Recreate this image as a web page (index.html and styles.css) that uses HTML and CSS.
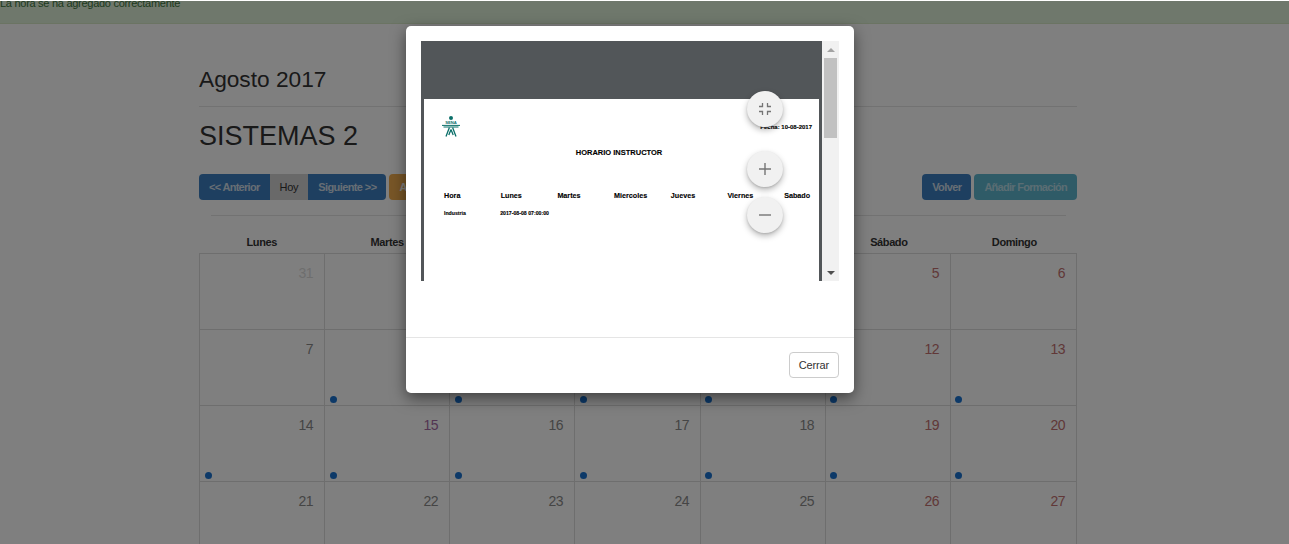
FILE: index.html
```html
<!DOCTYPE html>
<html lang="es">
<head>
<meta charset="utf-8">
<title>Horario</title>
<link rel="stylesheet" href="styles.css">
</head>
<body>
<div class="alert"><span class="alert-text">La hora se ha agregado correctamente</span></div>
<main class="container">
  <h3 class="month">Agosto 2017</h3>
  <h2 class="group">SISTEMAS 2</h2>
  <div class="toolbar">
    <div class="tools">
      <div class="btn-group">
        <a class="btn primary first">&lt;&lt; Anterior</a>
        <a class="btn plain">Hoy</a>
        <a class="btn primary last">Siguiente &gt;&gt;</a>
      </div>
      <a class="btn warning">Añadir Horario</a>
    </div>
    <div class="tools">
      <a class="btn primary round">Volver</a>
      <a class="btn info">Añadir Formación</a>
    </div>
  </div>
  <hr class="rule">
  <div class="weekdays">
    <div>Lunes</div><div>Martes</div><div>Miércoles</div><div>Jueves</div><div>Viernes</div><div>Sábado</div><div>Domingo</div>
  </div>
  <div class="calendar">
    <div class="cell"><span class="num other">31</span></div>
    <div class="cell"><span class="num">1</span></div>
    <div class="cell"><span class="num">2</span></div>
    <div class="cell"><span class="num">3</span></div>
    <div class="cell"><span class="num">4</span></div>
    <div class="cell"><span class="num red">5</span></div>
    <div class="cell"><span class="num red">6</span></div>

    <div class="cell"><span class="num">7</span></div>
    <div class="cell"><span class="num">8</span><i class="dot"></i></div>
    <div class="cell"><span class="num">9</span><i class="dot"></i></div>
    <div class="cell"><span class="num">10</span><i class="dot"></i></div>
    <div class="cell"><span class="num">11</span><i class="dot"></i></div>
    <div class="cell"><span class="num red">12</span><i class="dot"></i></div>
    <div class="cell"><span class="num red">13</span><i class="dot"></i></div>

    <div class="cell"><span class="num">14</span><i class="dot"></i></div>
    <div class="cell"><span class="num purple">15</span><i class="dot"></i></div>
    <div class="cell"><span class="num">16</span><i class="dot"></i></div>
    <div class="cell"><span class="num">17</span><i class="dot"></i></div>
    <div class="cell"><span class="num">18</span><i class="dot"></i></div>
    <div class="cell"><span class="num red">19</span><i class="dot"></i></div>
    <div class="cell"><span class="num red">20</span><i class="dot"></i></div>

    <div class="cell"><span class="num">21</span></div>
    <div class="cell"><span class="num">22</span></div>
    <div class="cell"><span class="num">23</span></div>
    <div class="cell"><span class="num">24</span></div>
    <div class="cell"><span class="num">25</span></div>
    <div class="cell"><span class="num red">26</span></div>
    <div class="cell"><span class="num red">27</span></div>
  </div>
</main>
<div class="backdrop"></div>
<section class="modal">
  <div class="modal-body">
    <div class="viewer">
      <div class="pdf">
        <div class="pdf-page">
          <div class="pdf-head">
            <svg class="logo" viewBox="0 0 18 21" width="18" height="21" aria-hidden="true">
              <circle cx="9" cy="2" r="2" fill="#0b6f69"/>
              <text x="9" y="8.3" text-anchor="middle" class="logo-text">SENA</text>
              <path d="M0 9.4h18M1.500 11h15" stroke="#0b6f69" stroke-width="1" fill="none"/>
              <path d="M7.400 11.500l-3.400 9M10.600 11.500l3.400 9M9 13.500l-2.200 5.500M9 13.500l2.200 5.500" stroke="#0b6f69" stroke-width="1.300" fill="none"/>
            </svg>
            <span class="pdf-date">Fecha: 10-08-2017</span>
          </div>
          <div class="pdf-title">HORARIO INSTRUCTOR</div>
          <div class="pdf-table pdf-th">
            <span>Hora</span><span>Lunes</span><span>Martes</span><span>Miercoles</span><span>Jueves</span><span>Viernes</span><span>Sabado</span>
          </div>
          <div class="pdf-table pdf-td">
            <span>Industria</span><span class="wide">2017-08-08 07:00:00</span>
          </div>
        </div>
      </div>
      <div class="scrollbar">
        <span class="arrow up"></span>
        <span class="track"><span class="thumb"></span></span>
        <span class="arrow down"></span>
      </div>
      <div class="fabs">
        <button class="fab fab-exit" type="button" aria-label="Ajustar">
          <svg viewBox="0 0 12 12" width="12" height="12"><path d="M3.500 0v3.500H0M8.500 0v3.500H12M3.500 12V8.500H0M8.500 12V8.500H12" fill="none" stroke="#757575" stroke-width="1.300"/></svg>
        </button>
        <button class="fab fab-plus" type="button" aria-label="Acercar">
          <svg viewBox="0 0 12 12" width="12" height="12"><path d="M0 6h12M6 0v12" fill="none" stroke="#757575" stroke-width="1.400"/></svg>
        </button>
        <button class="fab fab-minus" type="button" aria-label="Alejar">
          <svg viewBox="0 0 12 12" width="12" height="12"><path d="M0 6h12" fill="none" stroke="#757575" stroke-width="1.400"/></svg>
        </button>
      </div>
    </div>
  </div>
  <div class="modal-footer">
    <a class="btn close">Cerrar</a>
  </div>
</section>
</body>
</html>
```
FILE: styles.css
```css
* { box-sizing: border-box; }
html, body { margin: 0; padding: 0; height: 544px; overflow: hidden; }
body { background: #fff; font-family: "Liberation Sans", Arial, sans-serif; color: #333; position: relative; }

.alert { height: 23px; margin-top: 1px; background: #dff0d8; border-bottom: 1px solid #d6e9c6; overflow: hidden; color: #3c763d; font-size: 11px; line-height: 14px; letter-spacing: -.28px; }
.alert-text { display: block; margin-top: -5px; }

.container { width: 878px; margin-left: 199px; }
.month { margin: 42px 0 0; padding-bottom: 14px; border-bottom: 1px solid #e4e4e4; font-weight: 400; font-size: 22.7px; line-height: 26px; color: #333; }
.group { margin: 13px 0 0; font-weight: 400; font-size: 27px; line-height: 32px; color: #333; }

.toolbar { display: flex; justify-content: space-between; margin-top: 22px; }
.tools { display: flex; gap: 3px; }
.btn-group { display: flex; }
.btn { display: block; height: 26px; padding: 0 10px; font-size: 11px; letter-spacing: -.6px; line-height: 26px; font-weight: 700; white-space: nowrap; }
.primary { background: #3c7fc0; color: #cfdce9; }
.first { border-radius: 4px 0 0 4px; letter-spacing: -.7px; }
.last { border-radius: 0 4px 4px 0; }
.round { border-radius: 4px; }
.plain { background: #d2d2d2; color: #333; font-weight: 400; letter-spacing: -.3px; }
.warning { background: #f0ad4e; color: #fff; border-radius: 4px; }
.info { background: #5fb6cf; color: #b6dbe6; border-radius: 4px; letter-spacing: -.72px; }

.rule { margin: 15px 11px 0 12px; border: 0; border-top: 1px solid #e4e4e4; }

.weekdays { display: grid; grid-template-columns: repeat(7, 1fr); margin-top: 19px; margin-bottom: 4px; text-align: center; font-size: 11px; letter-spacing: -.4px; line-height: 14px; font-weight: 700; color: #333; }

.calendar { display: grid; grid-template-columns: 125px 125px 125px 126px 125px 125px 1fr; grid-auto-rows: 76px; border-right: 1px solid #ddd; }
.cell { display: flex; flex-direction: column; border-top: 1px solid #ddd; border-left: 1px solid #ddd; padding: 11px 0 2px 0; }
.num { align-self: flex-end; padding-right: 11px; font-size: 14px; letter-spacing: -.5px; line-height: 16px; color: #8a8a8a; }
.other { color: #dcdcdc; }
.red { color: #c27070; }
.purple { color: #a56ba5; }
.dot { display: block; width: 7px; height: 7px; margin: auto 0 0 5px; border-radius: 50%; background: #1a73d0; }
.cell:nth-child(7n+5) .dot, .cell:nth-child(7n+6) .dot, .cell:nth-child(7n) .dot { margin-left: 4px; }

.backdrop { position: absolute; inset: 1px 0 0 0; background: rgba(0, 0, 0, .5); }

.modal { position: absolute; left: 406px; top: 26px; width: 448px; height: 367px; background: #fff; border-radius: 5px; box-shadow: 0 5px 15px rgba(0, 0, 0, .5); }
.modal-body { padding: 15px 15px 0; height: 311px; }
.modal-footer { display: flex; justify-content: flex-end; border-top: 1px solid #e5e5e5; padding: 14px 15px 15px; }
.close { border: 1px solid #ccc; border-radius: 4px; background: #fff; color: #333; font-weight: 400; letter-spacing: -.15px; line-height: 24px; padding: 0 9px; }

.viewer { display: flex; height: 240px; position: relative; overflow: hidden; }
.pdf { flex: 1; background: #525659; padding: 58px 3px 0; overflow: hidden; }
.pdf-page { background: #fff; height: 300px; color: #000; font-weight: 700; position: relative; -webkit-text-stroke: .12px #000; }
.pdf-head { display: flex; justify-content: space-between; padding: 17px 7px 0 18px; height: 45px; }
.logo { display: block; }
.logo-text { font-size: 4.2px; font-weight: 700; fill: #0b6f69; -webkit-text-stroke: 0; }
.pdf-date { font-size: 6px; line-height: 8px; margin-top: 7px; }
.pdf-title { text-align: center; font-size: 7.5px; line-height: 10px; margin-top: 4px; padding-right: 5px; }
.pdf-table { display: grid; grid-template-columns: repeat(7, 56.7px); padding-left: 20px; }
.pdf-th { font-size: 7.2px; line-height: 10px; margin-top: 33px; }
.pdf-td { font-size: 5.2px; line-height: 8px; margin-top: 8px; }
.pdf-td .wide { grid-column: span 3; margin-left: -.5px; }

.scrollbar { display: flex; flex-direction: column; align-items: center; width: 17px; background: #f1f1f1; }
.arrow { flex: none; width: 0; height: 0; border-left: 4px solid transparent; border-right: 4px solid transparent; }
.up { border-bottom: 4px solid #a3a3a3; margin: 7px 0 6px; }
.down { border-top: 4px solid #505050; margin: 6px 0 6px; }
.track { flex: 1; width: 100%; padding: 0 2px; }
.thumb { display: block; height: 80px; background: #c1c1c1; }

.fabs { position: absolute; left: 326px; top: 50px; width: 36px; display: flex; flex-direction: column; }
.fab { display: flex; align-items: center; justify-content: center; width: 36px; height: 36px; padding: 0; border: 0; border-radius: 50%; background: #f1f1f1; box-shadow: 0 3px 6px rgba(0, 0, 0, .28), 0 1px 2px rgba(0, 0, 0, .12); }
.fab-plus { margin-top: 24px; }
.fab-minus { margin-top: 10px; }
```
